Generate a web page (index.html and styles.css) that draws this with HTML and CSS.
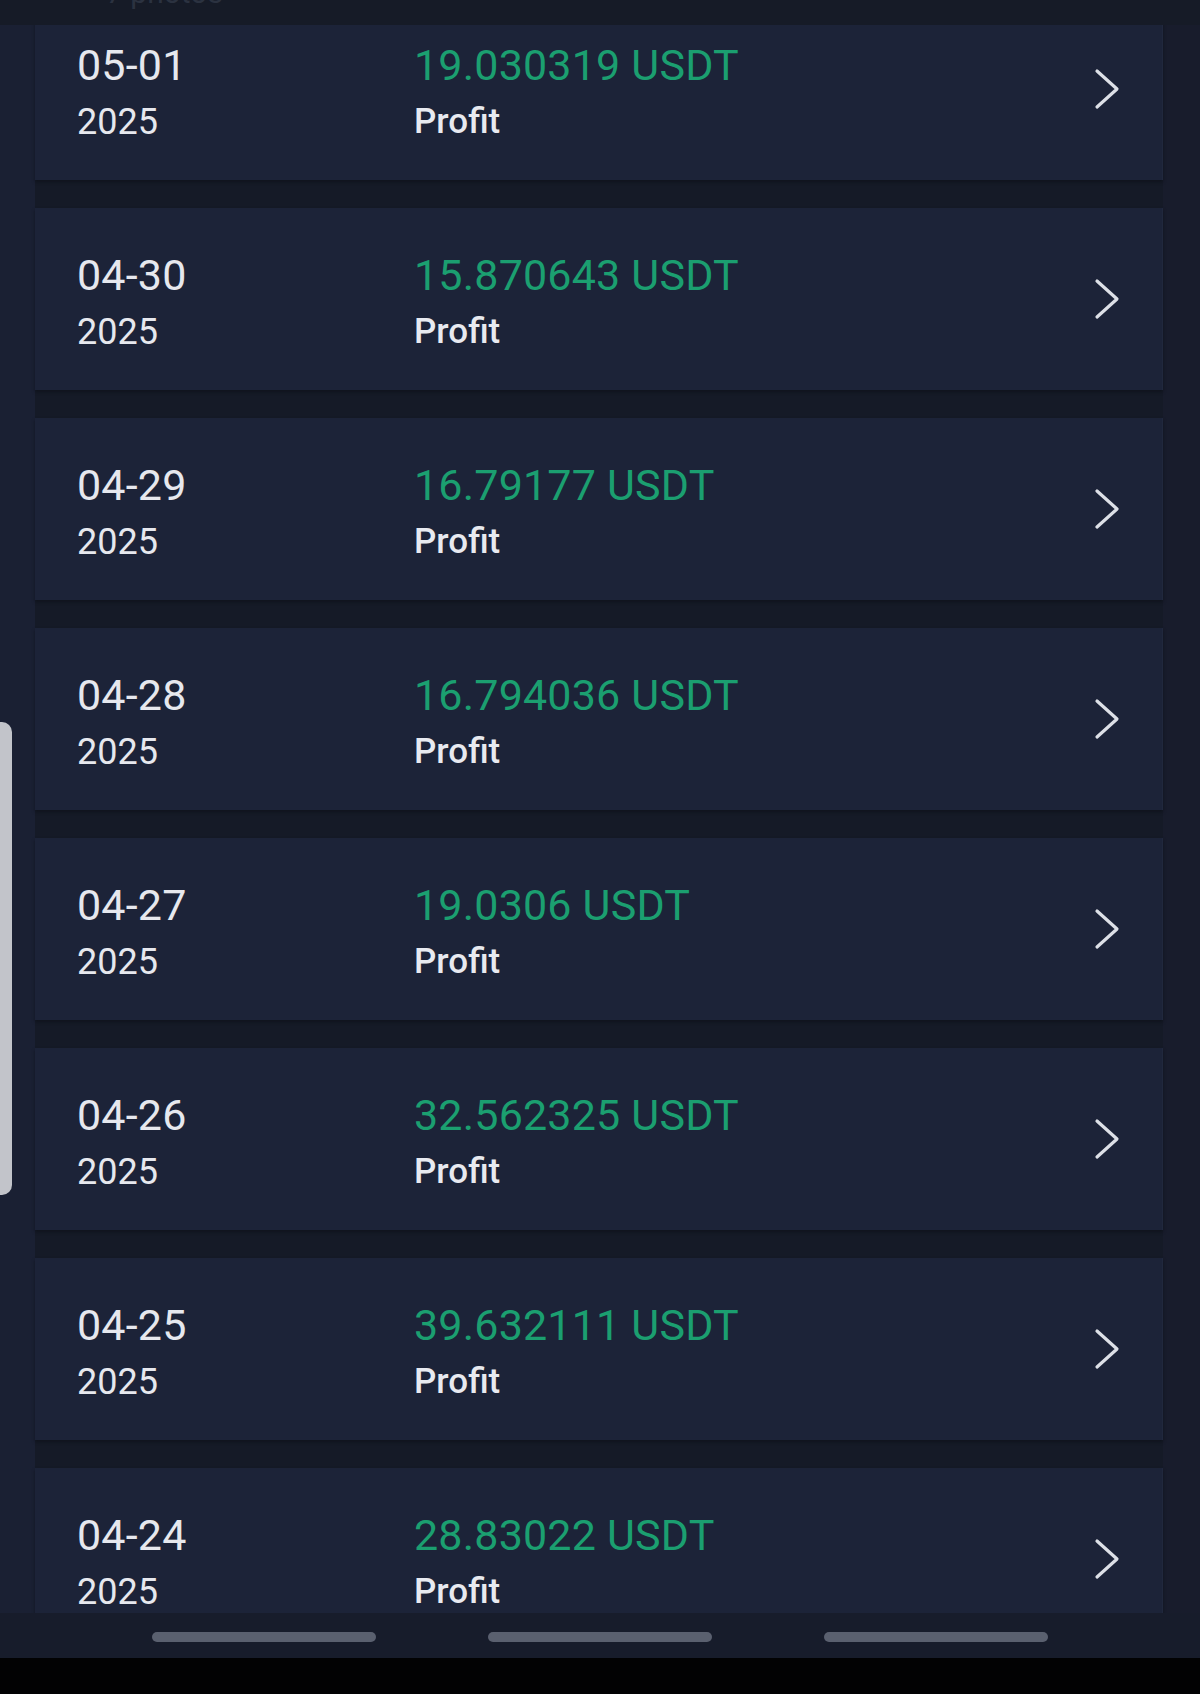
FILE: index.html
```html
<!DOCTYPE html>
<html lang="en">
<head>
<meta charset="utf-8">
<title>Profit history</title>
<link rel="stylesheet" href="styles.css">
</head>
<body>
<div class="screen">
  <div class="header"><span class="header-text">7 photos</span></div>
  <div class="list">
    <div class="cards">
      <div class="card first">
        <div class="date"><div class="md">05-01</div><div class="yr">2025</div></div>
        <div class="info"><div class="amt">19.030319 USDT</div><div class="lbl">Profit</div></div>
        <svg class="chev" viewBox="0 0 28 44" width="28" height="44"><polyline points="4,4 24,22 4,40"/></svg>
      </div>
      <div class="card">
        <div class="date"><div class="md">04-30</div><div class="yr">2025</div></div>
        <div class="info"><div class="amt">15.870643 USDT</div><div class="lbl">Profit</div></div>
        <svg class="chev" viewBox="0 0 28 44" width="28" height="44"><polyline points="4,4 24,22 4,40"/></svg>
      </div>
      <div class="card">
        <div class="date"><div class="md">04-29</div><div class="yr">2025</div></div>
        <div class="info"><div class="amt">16.79177 USDT</div><div class="lbl">Profit</div></div>
        <svg class="chev" viewBox="0 0 28 44" width="28" height="44"><polyline points="4,4 24,22 4,40"/></svg>
      </div>
      <div class="card">
        <div class="date"><div class="md">04-28</div><div class="yr">2025</div></div>
        <div class="info"><div class="amt">16.794036 USDT</div><div class="lbl">Profit</div></div>
        <svg class="chev" viewBox="0 0 28 44" width="28" height="44"><polyline points="4,4 24,22 4,40"/></svg>
      </div>
      <div class="card">
        <div class="date"><div class="md">04-27</div><div class="yr">2025</div></div>
        <div class="info"><div class="amt">19.0306 USDT</div><div class="lbl">Profit</div></div>
        <svg class="chev" viewBox="0 0 28 44" width="28" height="44"><polyline points="4,4 24,22 4,40"/></svg>
      </div>
      <div class="card">
        <div class="date"><div class="md">04-26</div><div class="yr">2025</div></div>
        <div class="info"><div class="amt">32.562325 USDT</div><div class="lbl">Profit</div></div>
        <svg class="chev" viewBox="0 0 28 44" width="28" height="44"><polyline points="4,4 24,22 4,40"/></svg>
      </div>
      <div class="card">
        <div class="date"><div class="md">04-25</div><div class="yr">2025</div></div>
        <div class="info"><div class="amt">39.632111 USDT</div><div class="lbl">Profit</div></div>
        <svg class="chev" viewBox="0 0 28 44" width="28" height="44"><polyline points="4,4 24,22 4,40"/></svg>
      </div>
      <div class="card">
        <div class="date"><div class="md">04-24</div><div class="yr">2025</div></div>
        <div class="info"><div class="amt">28.83022 USDT</div><div class="lbl">Profit</div></div>
        <svg class="chev" viewBox="0 0 28 44" width="28" height="44"><polyline points="4,4 24,22 4,40"/></svg>
      </div>
    </div>
  </div>
  <div class="nav">
    <span class="bar"></span><span class="bar"></span><span class="bar"></span>
  </div>
  <div class="sysbar"></div>
  <div class="handle"></div>
</div>
</body>
</html>
```

FILE: styles.css
```css
* { box-sizing: border-box; }

html, body {
  margin: 0;
  padding: 0;
  background: #171c2b;
}

body {
  font-family: Roboto, "Noto Sans", "Liberation Sans", sans-serif;
  color: #e6e8ee;
  overflow: hidden;
}

.screen {
  position: relative;
  width: 1200px;
  height: 1694px;
  display: flex;
  flex-direction: column;
  overflow: hidden;
}

.header {
  height: 25px;
  flex: none;
  background: #161b27;
  overflow: hidden;
  padding-left: 106px;
}

.header-text {
  display: block;
  margin-top: -25px;
  font-size: 30px;
  line-height: 36px;
  color: #2b3240;
}

.list {
  flex: 1;
  min-height: 0;
  overflow: hidden;
  background: linear-gradient(to right, #1a2033 0, #1a2033 35px, #171c2b 35px, #171c2b 1163px, #181c2c 1163px);
  padding: 0 37px 0 35px;
}

.cards {
  background: #151a27;
  display: flex;
  flex-direction: column;
  gap: 28px;
}

.card {
  flex: none;
  height: 182px;
  background: #1c2338;
  border-right: 1px solid #20283d;
  box-shadow: 0 2px 3px rgba(10, 12, 20, 0.5);
  display: flex;
  align-items: flex-start;
  padding: 42px 41px 0 42px;
}

.card.first {
  margin-top: -27px;
}

.date {
  width: 337px;
  flex: none;
}

.md, .amt {
  font-size: 43px;
  line-height: 50px;
  letter-spacing: 0.2px;
}

.yr, .lbl {
  margin-top: 12px;
  font-size: 35px;
  line-height: 40px;
}

.yr {
  font-size: 36px;
}

.info {
  flex: 1;
}

.amt {
  color: #1b9f70;
}

.lbl {
  font-weight: 500;
  color: #e8eaf0;
}

.chev {
  flex: none;
  align-self: center;
  margin-top: -42px;
  fill: none;
  stroke: #dde0e7;
  stroke-width: 3.2;
  stroke-linecap: round;
  stroke-linejoin: round;
}

.nav {
  height: 45px;
  flex: none;
  background: #171c2b;
  display: flex;
  justify-content: center;
  gap: 112px;
  padding-top: 19px;
}

.bar {
  width: 224px;
  height: 10px;
  border-radius: 5px;
  background: #5a606f;
}

.sysbar {
  height: 36px;
  flex: none;
  background: #020203;
}

.handle {
  position: absolute;
  left: 0;
  top: 722px;
  width: 12px;
  height: 473px;
  background: #c2c4ca;
  border-radius: 0 10px 10px 0;
}
```
